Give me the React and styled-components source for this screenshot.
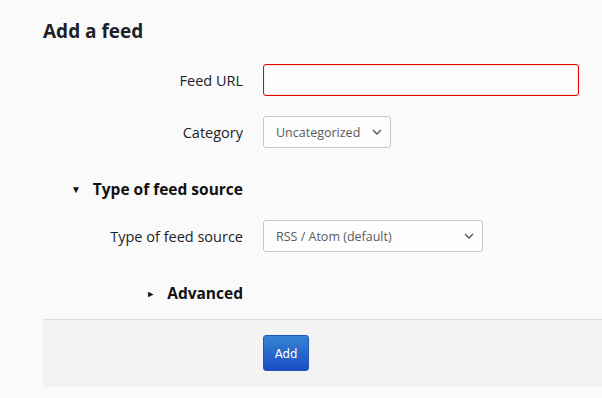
import React from "react";
import styled, { createGlobalStyle } from "styled-components";

const GlobalStyle = createGlobalStyle`
  body {
    margin: 0;
    background: #fafafa;
    font-family: "Open Sans", "Liberation Sans", sans-serif;
    color: #1d2125;
  }
`;

function App() {
  return (
    <>
      <GlobalStyle />
      <Page>
        <Heading>Add a feed</Heading>
        <FieldRow>
          <Label>Feed URL</Label>
          <TextInput invalid />
        </FieldRow>
        <FieldRow>
          <Label>Category</Label>
          <Select width="128px" value="Uncategorized" />
        </FieldRow>
        <SectionRow>
          <SectionTitle>
            <Caret>▼</Caret>
            Type of feed source
          </SectionTitle>
        </SectionRow>
        <FieldRow>
          <Label>Type of feed source</Label>
          <Select width="220px" value="RSS / Atom (default)" />
        </FieldRow>
        <SectionRow last>
          <SectionTitle>
            <Caret small>►</Caret>
            Advanced
          </SectionTitle>
        </SectionRow>
        <Footer>
          <span />
          <div>
            <AddButton>Add</AddButton>
          </div>
        </Footer>
      </Page>
    </>
  );
}

function Select({ width, value }) {
  return (
    <SelectBox width={width}>
      <span>{value}</span>
      <svg width="10" height="6" viewBox="0 0 10 6">
        <path d="M1 1l4 4 4-4" fill="none" stroke="#555" strokeWidth="1.4" />
      </svg>
    </SelectBox>
  );
}

export default App;

const Page = styled.div`
  padding: 19px 0 0 43px;
`;

const Heading = styled.h2`
  margin: 0 0 21px;
  font-size: 19px;
  line-height: 24px;
  font-weight: 700;
  color: #1d2125;
`;

const FieldRow = styled.div`
  display: grid;
  grid-template-columns: 200px 1fr;
  column-gap: 20px;
  align-items: center;
  height: 32px;
  margin-bottom: 20px;
`;

const Label = styled.label`
  text-align: right;
  font-size: 14.5px;
  color: #1d2125;
`;

const TextInput = styled.div`
  box-sizing: border-box;
  width: 316px;
  height: 32px;
  background: #fefefe;
  border: 1px solid ${(p) => (p.invalid ? "#e60000" : "#ccc")};
  border-radius: 3px;
  box-shadow: inset 0 0 2px rgba(230, 0, 0, 0.25);
`;

const SelectBox = styled.div`
  box-sizing: border-box;
  width: ${(p) => p.width};
  height: 32px;
  display: flex;
  align-items: center;
  justify-content: space-between;
  padding: 0 8px 0 12px;
  background: #fdfdfd;
  border: 1px solid #c8c8c8;
  border-radius: 3px;
  font-size: 12.5px;
  color: #5a5a5a;
`;

const SectionRow = styled.div`
  display: grid;
  grid-template-columns: 200px 1fr;
  height: 22px;
  margin: 30px 0 ${(p) => (p.last ? "15px" : "20px")};
`;

const SectionTitle = styled.div`
  display: flex;
  align-items: center;
  justify-content: flex-end;
  font-size: 15.5px;
  font-weight: 700;
  color: #111;
`;

const Caret = styled.span`
  font-size: ${(p) => (p.small ? "9px" : "10px")};
  margin-right: 12px;
  color: #111;
`;

const Footer = styled.div`
  display: grid;
  grid-template-columns: 200px 1fr;
  column-gap: 20px;
  background: #f3f3f3;
  border-top: 1px solid #dcdcdc;
  padding: 15px 0 16px;
`;

const AddButton = styled.button`
  box-sizing: border-box;
  width: 46px;
  height: 36px;
  border: 1px solid #1d55b8;
  border-radius: 3px;
  background: linear-gradient(#3685d4, #1b4cc6);
  color: #fff;
  font-family: "DejaVu Sans Condensed", "Open Sans", sans-serif;
  font-size: 13px;
  padding: 0;
`;
